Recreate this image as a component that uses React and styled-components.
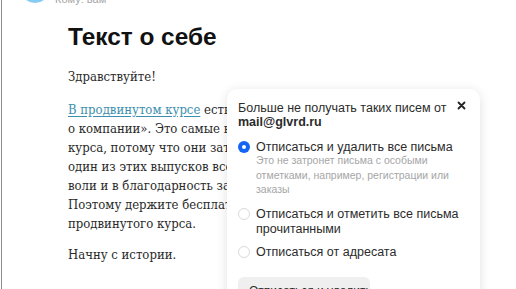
import React from "react";
import styled, { createGlobalStyle } from "styled-components";

const Global = createGlobalStyle`
  html, body { margin: 0; padding: 0; background: #fff; overflow: hidden; }
  body { font-family: "Liberation Sans", Arial, sans-serif; }
`;

const Page = styled.div`
  position: relative;
  height: 289px;
  overflow: hidden;
  border-left: 1px solid #8c8c8c;
  margin-left: 1px;
`;

const Header = styled.div`
  display: flex;
  align-items: flex-end;
  gap: 5px;
  margin-top: -27px;
  padding-left: 18px;
  height: 30px;
`;

const Avatar = styled.div`
  width: 30px;
  height: 30px;
  border-radius: 50%;
  background: #86cbf2;
`;

const To = styled.div`
  font-size: 11px;
  color: #a5a5a5;
  line-height: 12px;
  margin-bottom: -2px;
`;

const Content = styled.div`
  padding-left: 66px;
  padding-top: 20px;
`;

const Title = styled.h1`
  margin: 0;
  font-family: "Liberation Sans", Arial, sans-serif;
  font-weight: 700;
  font-size: 24.4px;
  line-height: 28px;
  color: #111;
`;

const P = styled.p`
  margin: ${(p) => p.$mt || 0}px 0 0;
  font-family: "DejaVu Serif Condensed", "DejaVu Serif", serif;
  font-stretch: condensed;
  font-size: 13px;
  line-height: 19px;
  color: #2a2a2a;
  white-space: nowrap;
`;

const Link = styled.a`
  color: #3d8fae;
  text-decoration: underline;
  text-underline-offset: 2px;
`;

const Card = styled.div`
  position: absolute;
  left: 225px;
  top: 89px;
  width: 253px;
  height: 240px;
  background: #fff;
  border-radius: 10px;
  box-shadow: 0 2px 12px rgba(0, 0, 0, 0.12);
  padding: 11.5px 11px 0 11px;
  box-sizing: border-box;
  color: #2b2b2b;
`;

const CardHead = styled.div`
  display: flex;
  justify-content: space-between;
  align-items: flex-start;
`;

const CardTitle = styled.div`
  font-size: 12.5px;
  line-height: 14px;
  color: #2b2b2b;
  b { font-weight: 700; }
`;

const Close = styled.button`
  border: 0;
  background: none;
  padding: 0;
  margin: 0 3px 0 0;
  width: 9px;
  height: 9px;
  display: flex;
  cursor: pointer;
`;

const Options = styled.div`
  display: flex;
  flex-direction: column;
  margin-top: 11px;
`;

const Option = styled.label`
  display: grid;
  grid-template-columns: 12px 1fr;
  column-gap: 6px;
  align-items: start;
  margin-top: ${(p) => p.$gap || 0}px;
`;

const Radio = styled.span`
  width: 12px;
  height: 12px;
  margin-top: 1.5px;
  box-sizing: border-box;
  border-radius: 50%;
  border: ${(p) => (p.$on ? "none" : "1px solid #dadada")};
  background: ${(p) => (p.$on ? "#1565f5" : "#fff")};
  display: flex;
  align-items: center;
  justify-content: center;
  &::after {
    content: "";
    display: ${(p) => (p.$on ? "block" : "none")};
    width: 4px;
    height: 4px;
    border-radius: 50%;
    background: #fff;
  }
`;

const Label = styled.div`
  font-size: 12.5px;
  line-height: 15px;
  color: #2b2b2b;
`;

const Hint = styled.div`
  font-size: 10.5px;
  line-height: 14.5px;
  color: #a6a6a6;
  margin-top: -1.5px;
`;

const Button = styled.button`
  margin-top: 17.5px;
  width: 132px;
  border: 0;
  border-radius: 6px;
  background: #efefef;
  font-family: inherit;
  font-size: 12px;
  line-height: 14px;
  color: #2b2b2b;
  text-align: left;
  white-space: nowrap;
  padding: 7px 11px 10px;
`;

export default function App() {
  return (
    <>
      <Global />
      <Page>
        <Header>
          <Avatar />
          <To>Кому: вам</To>
        </Header>
        <Content>
          <Title>Текст о себе</Title>
          <P $mt={15.5}>Здравствуйте!</P>
          <P $mt={14}>
            <Link href="#">В продвинутом курсе</Link> есть темы «Текст о себе» и «Текст
            <br />о компании». Это самые востребованные выпуски всего
            <br />курса, потому что они затрагивают каждого. Я дарю
            <br />один из этих выпусков всем подписчикам по доброй
            <br />воли и в благодарность за то, что вы с нами.
            <br />Поэтому держите бесплатный выпуск из
            <br />продвинутого курса.
          </P>
          <P $mt={12}>Начну с истории.</P>
        </Content>
        <Card>
          <CardHead>
            <CardTitle>
              Больше не получать таких писем от
              <br />
              <b>mail@glvrd.ru</b>
            </CardTitle>
            <Close aria-label="Закрыть">
              <svg width="9" height="9" viewBox="0 0 9 9">
                <path d="M1.5 1.5l6 6M7.5 1.5l-6 6" stroke="#222" strokeWidth="1.8" strokeLinecap="round" />
              </svg>
            </Close>
          </CardHead>
          <Options>
            <Option>
              <Radio $on />
              <div>
                <Label>Отписаться и удалить все письма</Label>
                <Hint>
                  Это не затронет письма с особыми
                  <br />
                  отметками, например, регистрации или
                  <br />
                  заказы
                </Hint>
              </div>
            </Option>
            <Option $gap={10}>
              <Radio />
              <Label>
                Отписаться и отметить все письма
                <br />
                прочитанными
              </Label>
            </Option>
            <Option $gap={8}>
              <Radio />
              <Label>Отписаться от адресата</Label>
            </Option>
          </Options>
          <Button>Отписаться и удалить</Button>
        </Card>
      </Page>
    </>
  );
}
